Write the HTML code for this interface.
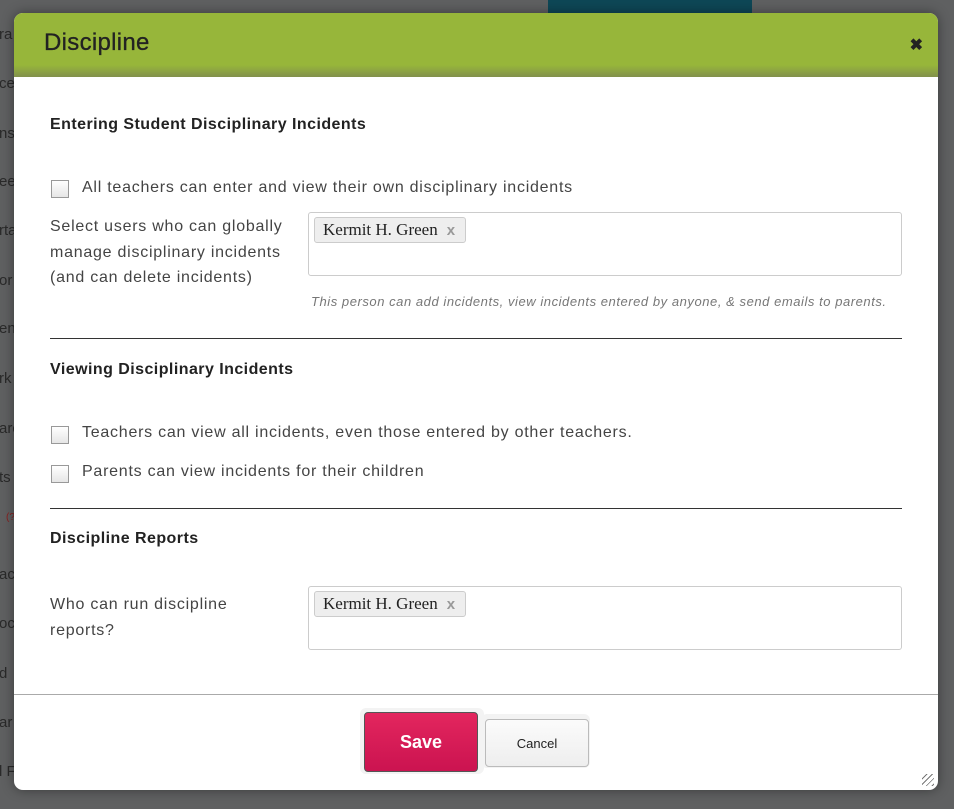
<!DOCTYPE html>
<html><head><style>
body{margin:0;width:954px;height:809px;background:#5f6061;position:relative;overflow:hidden;font-family:"Liberation Sans",sans-serif;}
.bg{position:absolute;left:-1px;color:#2a2a2a;font-size:15px;}
.teal{position:absolute;left:548px;top:0;width:204px;height:14px;background:#0e4756;}
.modal{position:absolute;left:14px;top:13px;width:924px;height:777px;background:#fff;border-radius:9px;overflow:hidden;box-shadow:0 0 12px rgba(0,0,0,.4);}
.hd{height:64px;background:linear-gradient(#97b63a 0,#97b63a 52px,#82904c 64px);position:relative;}
.hd h1{margin:0;position:absolute;left:30px;top:16px;font-size:24px;font-weight:normal;color:#222;letter-spacing:.3px;-webkit-text-stroke:.3px #222}
.x{position:absolute;right:15px;top:22px;font-size:16px;font-weight:bold;color:#222}
.t{position:absolute;color:#444;font-size:16px;letter-spacing:.75px}
.h{position:absolute;left:36px;font-size:16px;font-weight:bold;color:#222;letter-spacing:.45px}
.cb{position:absolute;left:37px;width:16px;height:16px;border:1px solid #999;background:linear-gradient(#fff,#e6e6e6);}
.box{position:absolute;left:294px;width:592px;height:62px;border:1px solid #ccc;border-radius:3px;}
.tag{position:absolute;left:5px;top:4px;height:24px;padding:0 10px 0 8px;border:1px solid #ccc;border-radius:3px;background:#eee;font-family:"Liberation Serif",serif;font-size:17px;line-height:24px;color:#222}
.tag b{color:#999;margin-left:9px;font-family:"Liberation Sans";font-size:15px}
hr{position:absolute;left:36px;width:852px;border:0;border-top:1px solid #333;margin:0}
</style></head><body>
<div class="teal"></div>
<div class="bg" style="top:26px">ra</div><div class="bg" style="top:75px">ce</div><div class="bg" style="top:125px">ns</div><div class="bg" style="top:173px">ee</div><div class="bg" style="top:222px">rta</div><div class="bg" style="top:272px">or</div><div class="bg" style="top:320px">en</div><div class="bg" style="top:370px">rk</div><div class="bg" style="top:420px">arc</div><div class="bg" style="top:469px">ts</div><div class="bg" style="top:512px;left:6px;font-size:10px;color:#8a2020">(?</div><div class="bg" style="top:566px">ac</div><div class="bg" style="top:615px">oc</div><div class="bg" style="top:665px">d</div><div class="bg" style="top:714px">ar</div><div class="bg" style="top:763px">l F</div>
<div class="modal">
<div class="hd"><h1>Discipline</h1><span class="x">✖</span></div>
<div class="h" style="top:103px">Entering Student Disciplinary Incidents</div>
<div class="cb" style="top:167px"></div><div class="t" style="left:68px;top:166px">All teachers can enter and view their own disciplinary incidents</div>
<div class="t" style="left:36px;top:201px;line-height:25.5px">Select users who can globally<br>manage disciplinary incidents<br>(and can delete incidents)</div>
<div class="box" style="top:199px"><div class="tag">Kermit H. Green<b>x</b></div></div>
<div class="t" style="left:297px;top:281px;font-size:13px;font-style:italic;color:#777;letter-spacing:.55px">This person can add incidents, view incidents entered by anyone, &amp; send emails to parents.</div>
<hr style="top:325px">
<div class="h" style="top:348px">Viewing Disciplinary Incidents</div>
<div class="cb" style="top:413px"></div><div class="t" style="left:68px;top:411px">Teachers can view all incidents, even those entered by other teachers.</div>
<div class="cb" style="top:452px"></div><div class="t" style="left:68px;top:450px">Parents can view incidents for their children</div>
<hr style="top:495px">
<div class="h" style="top:517px">Discipline Reports</div>
<div class="t" style="left:36px;top:579px;line-height:25.5px">Who can run discipline<br>reports?</div>
<div class="box" style="top:573px"><div class="tag">Kermit H. Green<b>x</b></div></div>
<div style="position:absolute;left:0;top:681px;width:924px;border-top:1px solid #aaa"></div>
<div style="position:absolute;left:346px;top:695px;width:124px;height:66px;background:#f3f3f3;border-radius:6px"></div>
<div style="position:absolute;left:350px;top:699px;width:112px;height:58px;background:linear-gradient(#e3265e,#cb1350);border:1px solid #555;border-radius:4px;color:#fff;font-weight:bold;font-size:18px;text-align:center;line-height:58px">Save</div>
<div style="position:absolute;left:467px;top:701px;width:109px;height:54px;background:#f3f3f3;border-radius:6px"></div>
<div style="position:absolute;left:471px;top:706px;width:102px;height:46px;background:linear-gradient(#fbfbfb,#eee);border:1px solid #bbb;border-radius:4px;color:#222;font-size:13px;text-align:center;line-height:48px">Cancel</div>
<div style="position:absolute;right:4px;bottom:4px;width:12px;height:12px;background:repeating-linear-gradient(135deg,transparent 0 3px,#777 3px 4px)"></div>
</div>
</body></html>
